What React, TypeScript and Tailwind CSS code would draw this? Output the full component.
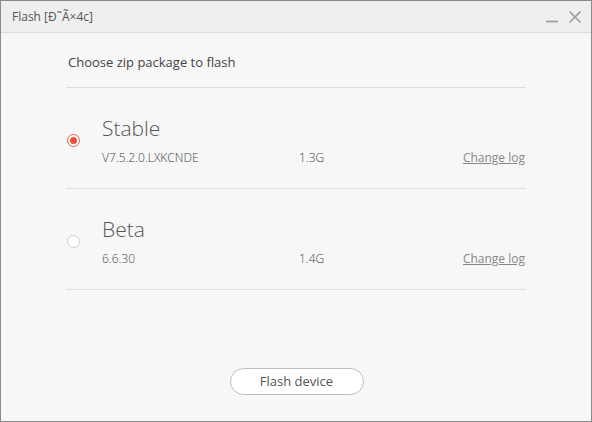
import { useState } from 'react'

const builds = [
  { name: 'Stable', version: 'V7.5.2.0.LXKCNDE', size: '1.3G' },
  { name: 'Beta', version: '6.6.30', size: '1.4G' },
]

function Radio({ checked }: { checked: boolean }) {
  return (
    <div
      className={`flex h-[13px] w-[13px] items-center justify-center rounded-full border bg-white ${
        checked ? 'border-[#f0604a]' : 'border-[#cfcfcf]'
      }`}
    >
      {checked && <div className="h-[7px] w-[7px] rounded-full bg-[#f0503a]" />}
    </div>
  )
}

export default function App() {
  const [selected, setSelected] = useState(0)

  return (
    <div
      className="flex h-[422px] w-[592px] flex-col border border-[#8c8c8c] bg-[#f7f7f7] text-[#555]"
      style={{ fontFamily: '"Open Sans", "Noto Sans", sans-serif' }}
    >
      {/* title bar */}
      <div className="flex h-[32px] flex-shrink-0 items-center justify-between border-b border-[#dcdcdc] bg-[#efefef] pl-[11px] pr-[9px]">
        <span className="text-[12px] text-[#555]">Flash [Ð˜Ã×4c]</span>
        <div className="flex items-center gap-[9px] text-[#9a9a9a]">
          <svg width="14" height="14" viewBox="0 0 14 14">
            <path d="M1 11.5H13" stroke="currentColor" strokeWidth="1.6" />
          </svg>
          <svg width="14" height="14" viewBox="0 0 14 14">
            <path d="M1.5 1.5L12.5 12.5M12.5 1.5L1.5 12.5" stroke="currentColor" strokeWidth="1.6" />
          </svg>
        </div>
      </div>

      {/* body */}
      <div className="flex flex-1 flex-col px-[65px]">
        <div className="border-b border-[#dedede] pb-[15px] pt-[19px] pl-[2px] text-[13px] leading-[20px] text-[#444]">
          Choose zip package to flash
        </div>

        {builds.map((b, i) => (
          <div
            key={b.name}
            className="flex h-[101px] cursor-pointer items-start border-b border-[#dedede]"
            onClick={() => setSelected(i)}
          >
            <div className="ml-[1px] mt-[46px] w-[35px]">
              <Radio checked={selected === i} />
            </div>
            <div className="flex flex-1 flex-col pt-[26px]">
              <div className="text-[21px] font-light leading-[28px] text-[#555]">{b.name}</div>
              <div className="mt-[8px] flex items-center text-[12px] font-light leading-[16px] text-[#444]">
                <span className="w-[197px]">{b.version}</span>
                <span className="flex-1">{b.size}</span>
                <a className="mr-[1px] text-[12px] font-normal text-[#888] underline">Change log</a>
              </div>
            </div>
          </div>
        ))}

        <div className="flex-1" />
        <div className="flex justify-center pb-[26px] pl-[1px]">
          <button className="h-[27px] w-[134px] rounded-full border border-[#bdbdbd] bg-white text-[13px] text-[#555]">
            Flash device
          </button>
        </div>
      </div>
    </div>
  )
}
